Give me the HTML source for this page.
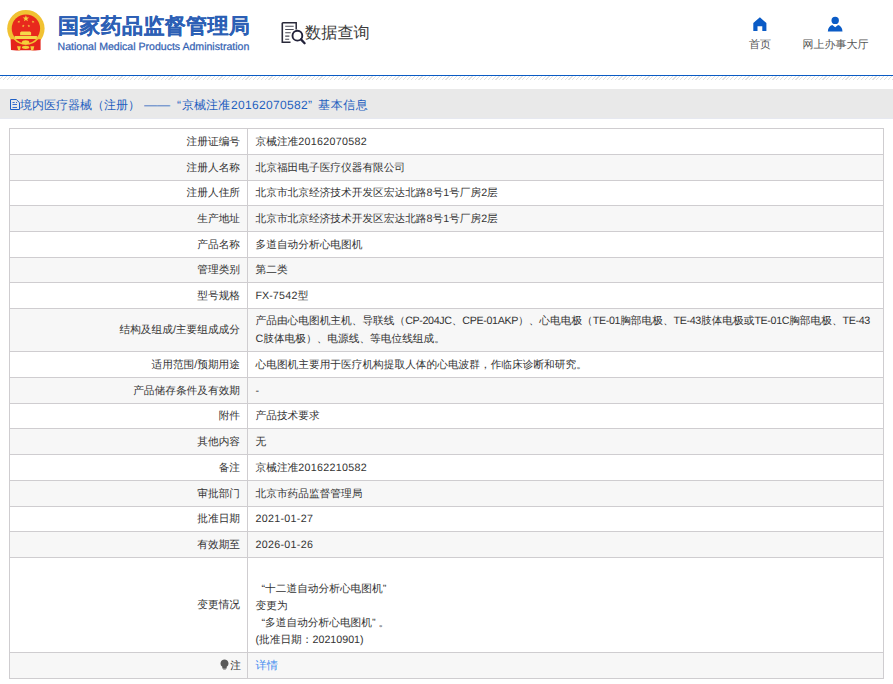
<!DOCTYPE html>
<html><head><meta charset="utf-8">
<style>
*{box-sizing:border-box;margin:0;padding:0}
html,body{width:893px;height:684px;overflow:hidden;background:#fff;text-rendering:geometricPrecision;font-family:"Liberation Sans",sans-serif}
.abs{position:absolute}
#title{left:58px;top:13px;font-size:21px;letter-spacing:0.35px;font-weight:bold;color:#2c5fb5;-webkit-text-stroke:0.15px #2c5fb5;line-height:28px;white-space:nowrap}
#en{left:57.6px;top:40.6px;font-size:10.55px;color:#3563b3;-webkit-text-stroke:0.25px #3563b3;line-height:12px;white-space:nowrap}
#sj{left:305px;top:22px;font-size:16.2px;color:#3c3c3c;line-height:22px;white-space:nowrap}
.nav{font-size:11px;color:#555;line-height:14px;white-space:nowrap;text-align:center}
#blue{left:0;top:75px;width:893px;height:1px;background:#0a5bc4}
#hatch{left:0;top:76px;width:893px;height:4px;background:repeating-linear-gradient(135deg,#fff 0 1.9px,#e0e0e0 1.9px 2.72px)}
#bar{left:0;top:89px;width:893px;height:30px;background:#e9e9e9;border-bottom:1px solid #e6e8f0}
#bartxt{left:20px;top:97px;font-size:12px;color:#1f5fbf;line-height:16px;white-space:nowrap}
.row{position:absolute;left:9px;width:875px;border:1px solid #cfcdd0;border-bottom:none}
.g{background:#f7f7f7}
i.l{font-style:normal;letter-spacing:-0.35px}
i.d{font-style:normal;letter-spacing:.3px}
.lab{position:absolute;left:0;width:230px;text-align:right;font-size:10.7px;color:#333;line-height:17px;white-space:nowrap}
.val{position:absolute;left:245.5px;font-size:10.7px;color:#333;line-height:17px;white-space:nowrap}
.div{position:absolute;left:237px;top:0;bottom:0;width:1px;background:#cfcdd0}
</style></head><body>
<svg class="abs" style="left:0;top:0" width="52" height="56" viewBox="0 0 52 56">
  <circle cx="25.9" cy="28.6" r="18.7" fill="#f1c232"/>
  <circle cx="25.9" cy="28.6" r="14.2" fill="#e8291d"/>
  <path d="M25.90 15.20 L26.70 17.50 L29.13 17.55 L27.19 19.02 L27.90 21.35 L25.90 19.96 L23.90 21.35 L24.61 19.02 L22.67 17.55 L25.10 17.50ZM19.31 20.39 L19.30 21.46 L20.30 21.85 L19.27 22.17 L19.21 23.24 L18.59 22.36 L17.56 22.64 L18.20 21.78 L17.62 20.88 L18.63 21.22ZM32.59 20.39 L33.27 21.22 L34.28 20.88 L33.70 21.78 L34.34 22.64 L33.31 22.36 L32.69 23.24 L32.63 22.17 L31.60 21.85 L32.60 21.46ZM23.46 24.52 L23.63 25.58 L24.69 25.79 L23.73 26.28 L23.86 27.35 L23.10 26.59 L22.12 27.04 L22.61 26.08 L21.88 25.30 L22.94 25.46ZM28.64 24.52 L29.16 25.46 L30.22 25.30 L29.49 26.08 L29.98 27.04 L29.00 26.59 L28.24 27.35 L28.37 26.28 L27.41 25.79 L28.47 25.58Z" fill="#f5d040"/>
  <path d="M20.1 35.2h11v-2.6l-1.2-1.2h-8.6l-1.2 1.2z M14.7 39h22.2v-2.9h-22.2z" fill="#f6d84a"/>
  <path d="M10.6 39.2 L40.6 39.2 L40.6 50 Q36 50.8 31 50.2 L21 50.2 Q15.5 50.8 11 50 Z" fill="#e5231b"/>
  <path d="M14.10 38.5 A15.4 15.4 0 0 0 37.70 38.5" stroke="#f1c232" stroke-width="1.6" fill="none"/>
  <ellipse cx="25.6" cy="42.3" rx="3.7" ry="2.1" fill="#f5cf3a"/>
  <path d="M17 46.3 L20.8 46.2 L20 50.2 L18.2 50.2 Z M30.3 46.2 L34.3 46.3 L33.3 50.2 L31.2 50.2 Z" fill="#f3cd3a"/>
  <ellipse cx="25.6" cy="47.3" rx="3.7" ry="1.6" fill="#f3cd3a"/>
</svg>
<div id="title" class="abs">国家药品监督管理局</div>
<div id="en" class="abs">National Medical Products Administration</div>
<svg class="abs" style="left:281px;top:22px" width="26" height="24" viewBox="0 0 26 24">
  <path d="M1.3 0.8h13.9v6.6" stroke="#2a2a3a" stroke-width="1.5" fill="none"/>
  <path d="M1.3 0.8v19.5h8.2" stroke="#2a2a3a" stroke-width="1.6" fill="none"/>
  <path d="M4.2 4.2h8.5M4.2 7.5h8.5M4.2 10.8h5.5M4.2 14.1h4.2M4.2 17.2h4" stroke="#4a4a55" stroke-width="1.1" fill="none"/>
  <circle cx="16.4" cy="13.7" r="4.9" stroke="#22223a" stroke-width="1.9" fill="none"/>
  <path d="M20 17.4l3.6 3.8" stroke="#22223a" stroke-width="2.3" stroke-linecap="round"/>
</svg>
<div id="sj" class="abs">数据查询</div>
<svg class="abs" style="left:752px;top:17px" width="16" height="15" viewBox="0 0 16 15">
  <path d="M7.9 0.3L14.4 6V14H10.3V9.2H5.5V14H1.3V6Z" fill="#0a5bc6"/>
</svg>
<div class="abs nav" style="left:739.5px;top:38px;width:41px">首页</div>
<svg class="abs" style="left:827px;top:16px" width="16" height="16" viewBox="0 0 16 16">
  <circle cx="8.2" cy="4.4" r="3.7" fill="#0a5bc6"/>
  <path d="M0.8 15.5 C1 11.8 2.8 9.5 5.3 8.9 L8.2 11.2 L11.1 8.9 C13.6 9.5 15.4 11.8 15.5 15.5Z" fill="#0a5bc6"/>
</svg>
<div class="abs nav" style="left:795.5px;top:38px;width:80px">网上办事大厅</div>
<div id="blue" class="abs"></div>
<div id="hatch" class="abs"></div>
<div id="bar" class="abs"></div>
<svg class="abs" style="left:10px;top:99px" width="10" height="11" viewBox="0 0 10 11">
  <path d="M0.5 0.5H6.3L9.5 3.7V10.5H0.5Z" stroke="#1f5fc4" stroke-width="1" fill="none" stroke-linejoin="round"/>
  <path d="M2.5 3.5h2.2M6 3.5h1M2.5 5.5h4.5M2.5 8.5h4.5" stroke="#3a6fd0" stroke-width="1"/>
</svg>
<div id="bartxt" class="abs">境内医疗器械（注册）<span style="display:inline-block;margin-left:4px;width:27px;"><span style="display:inline-block;transform:scaleX(1.09);transform-origin:0 0">——</span></span><span style="margin-left:6px">“</span><span style="margin-left:1px">京械注准</span><span style="margin-left:1px;letter-spacing:.33px">20162070582</span>”<span style="margin-left:6px;letter-spacing:.6px">基本信息</span></div>
<!--TBL-->
<div class="row" style="top:128px;height:26px"><div class="lab" style="top:4.75px">注册证编号</div><div class="div"></div><div class="val" style="top:4.55px;line-height:17px">京械注准<i class="d">20162070582</i></div></div>
<div class="row g" style="top:154px;height:26px"><div class="lab" style="top:4.75px">注册人名称</div><div class="div"></div><div class="val" style="top:4.55px;line-height:17px">北京福田电子医疗仪器有限公司</div></div>
<div class="row" style="top:180px;height:25px"><div class="lab" style="top:4.25px">注册人住所</div><div class="div"></div><div class="val" style="top:4.05px;line-height:17px">北京市北京经济技术开发区宏达北路8号1号厂房2层</div></div>
<div class="row g" style="top:205px;height:26px"><div class="lab" style="top:4.75px">生产地址</div><div class="div"></div><div class="val" style="top:4.55px;line-height:17px">北京市北京经济技术开发区宏达北路8号1号厂房2层</div></div>
<div class="row" style="top:231px;height:26px"><div class="lab" style="top:4.75px">产品名称</div><div class="div"></div><div class="val" style="top:4.55px;line-height:17px">多道自动分析心电图机</div></div>
<div class="row g" style="top:257px;height:25px"><div class="lab" style="top:4.25px">管理类别</div><div class="div"></div><div class="val" style="top:4.05px;line-height:17px">第二类</div></div>
<div class="row" style="top:282px;height:26px"><div class="lab" style="top:4.75px">型号规格</div><div class="div"></div><div class="val" style="top:4.55px;line-height:17px">FX-<i class="d">7542</i>型</div></div>
<div class="row g" style="top:308px;height:43px"><div class="lab" style="top:13.25px">结构及组成/主要组成成分</div><div class="div"></div><div class="val" style="top:4.35px;line-height:17.4px">产品由心电图机主机、导联线（<i class="l">CP-204JC</i>、<i class="l">CPE-01AKP</i>）、心电电极（<i class="l">TE-01</i>胸部电极、<i class="l">TE-43</i>肢体电极或<i class="l">TE-01C</i>胸部电极、<i class="l">TE-43</i><br>C肢体电极）、电源线、等电位线组成。</div></div>
<div class="row" style="top:351px;height:26px"><div class="lab" style="top:4.75px">适用范围/预期用途</div><div class="div"></div><div class="val" style="top:4.55px;line-height:17px">心电图机主要用于医疗机构提取人体的心电波群，作临床诊断和研究。</div></div>
<div class="row g" style="top:377px;height:26px"><div class="lab" style="top:4.75px">产品储存条件及有效期</div><div class="div"></div><div class="val" style="top:4.55px;line-height:17px">-</div></div>
<div class="row" style="top:403px;height:25px"><div class="lab" style="top:4.25px">附件</div><div class="div"></div><div class="val" style="top:4.05px;line-height:17px">产品技术要求</div></div>
<div class="row g" style="top:428px;height:26px"><div class="lab" style="top:4.75px">其他内容</div><div class="div"></div><div class="val" style="top:4.55px;line-height:17px">无</div></div>
<div class="row" style="top:454px;height:26px"><div class="lab" style="top:4.75px">备注</div><div class="div"></div><div class="val" style="top:4.55px;line-height:17px">京械注准<i class="d">20162210582</i></div></div>
<div class="row g" style="top:480px;height:26px"><div class="lab" style="top:4.75px">审批部门</div><div class="div"></div><div class="val" style="top:4.55px;line-height:17px">北京市药品监督管理局</div></div>
<div class="row" style="top:506px;height:25px"><div class="lab" style="top:4.25px">批准日期</div><div class="div"></div><div class="val" style="top:4.05px;line-height:17px"><i class="d">2021-01-27</i></div></div>
<div class="row g" style="top:531px;height:26px"><div class="lab" style="top:4.75px">有效期至</div><div class="div"></div><div class="val" style="top:4.55px;line-height:17px"><i class="d">2026-01-26</i></div></div>
<div class="row" style="top:557px;height:95px"><div class="lab" style="top:39.25px">变更情况</div><div class="div"></div><div class="val" style="top:5.25px;line-height:17.3px"><br><span style="margin-left:6px">“</span>十二道自动分析心电图机”<br>变更为<br><span style="margin-left:6px">“</span>多道自动分析心电图机”<span style="margin-left:3px">。</span><br>(批准日期：20210901)</div></div>
<div class="row g" style="border-bottom:1px solid #cfcdd0;height:27px;top:652px"><div class="lab" style="top:4.75px;width:231px"><svg width="9" height="11" viewBox="0 0 9 11" style="vertical-align:-1px;margin-right:1px"><path d="M4.5 0.5a4 4 0 0 1 2.2 7.3v1.7h-4.4v-1.7a4 4 0 0 1 2.2-7.3z" fill="#5a5a5a"/><path d="M3.2 10h2.6" stroke="#5a5a5a" stroke-width="1"/></svg>注</div><div class="div"></div><div class="val" style="top:5.05px"><span style="color:#3f8cf0;font-size:11.2px">详情</span></div></div>
<!--/TBL-->
</body></html>
